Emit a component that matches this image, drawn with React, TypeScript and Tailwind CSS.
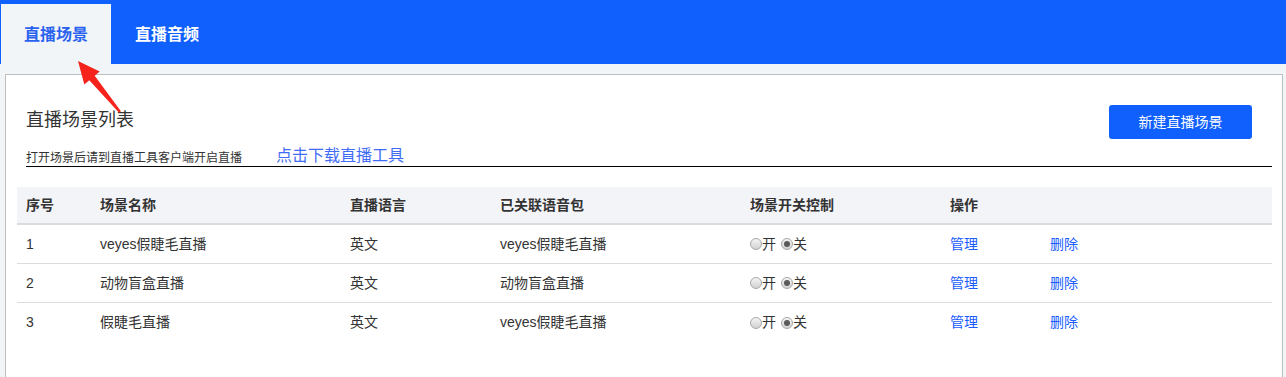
import React from "react";

const rows = [
  { id: "1", name: "veyes假睫毛直播", lang: "英文", pack: "veyes假睫毛直播" },
  { id: "2", name: "动物盲盒直播", lang: "英文", pack: "动物盲盒直播" },
  { id: "3", name: "假睫毛直播", lang: "英文", pack: "veyes假睫毛直播" },
];

const grid = "grid grid-cols-[74px_250px_150px_250px_200px_100px_1fr] pl-[9px]";

function Radio({ checked }: { checked?: boolean }) {
  return (
    <span className="inline-flex w-[12px] h-[12px] rounded-full border border-[#a8a8a8] bg-gradient-to-b from-[#f4f4f4] to-[#d2d2d2] items-center justify-center">
      {checked && <span className="w-[6px] h-[6px] rounded-full bg-[#5a5a5a]" />}
    </span>
  );
}

export default function App() {
  return (
    <div className="relative w-[1286px] h-[377px] overflow-hidden bg-[#f2f5f7] font-['Liberation_Sans','Noto_Sans_CJK_SC',sans-serif] text-[#333]">
      <div className="h-16 bg-[#1060fe] flex items-end pl-px">
        <div className="h-[60px] w-[110px] bg-[#f2f5f7] flex items-center justify-center pt-[2px] text-[16px] font-bold text-[#2a62f0]">
          直播场景
        </div>
        <div className="h-[60px] pl-[24px] pt-[2px] flex items-center text-[16px] font-bold text-white">直播音频</div>
      </div>

      <div className="mt-[10px] ml-[5px] mr-[3px] h-[320px] bg-white border border-[#bdbdbd]">
        <div className="pl-5 pr-[10px] pt-[30px]">
          <div className="flex items-center justify-between h-[34px]">
            <div className="text-[18px] leading-[24px] -mt-[4px]">直播场景列表</div>
            <button className="mr-[20px] w-[143px] h-[34px] rounded-[3px] bg-[#1060fe] text-white text-[14px]">
              新建直播场景
            </button>
          </div>
          <div className="flex items-end h-[28px] border-b border-black">
            <span className="text-[12px] leading-[16px]">打开场景后请到直播工具客户端开启直播</span>
            <span className="ml-[34px] text-[16px] leading-[20px] text-[#3f6cf5]">点击下载直播工具</span>
          </div>
        </div>

        <div className="ml-[11px] mr-[10px] mt-[20px] text-[14px]">
          <div className={`${grid} h-[38px] items-center bg-[#f3f4f8] font-bold border-b-2 border-[#dcdcdc]`}>
            <div>序号</div>
            <div>场景名称</div>
            <div>直播语言</div>
            <div>已关联语音包</div>
            <div>场景开关控制</div>
            <div>操作</div>
            <div />
          </div>
          {rows.map((r, i) => (
            <div
              key={r.id}
              className={`${grid} h-[39px] items-center ${i < rows.length - 1 ? "border-b border-[#dcdcdc]" : ""}`}
            >
              <div>{r.id}</div>
              <div>{r.name}</div>
              <div>{r.lang}</div>
              <div>{r.pack}</div>
              <div className="flex items-center">
                <Radio />
                <span>开</span>
                <span className="ml-[5px] flex items-center">
                  <Radio checked />
                  <span>关</span>
                </span>
              </div>
              <div className="text-[#1a5cff]">管理</div>
              <div className="text-[#1a5cff]">删除</div>
            </div>
          ))}
        </div>
      </div>

      <svg className="absolute left-0 top-0" width="140" height="130" viewBox="0 0 140 130">
        <polygon
          points="78,61 99.7,71.6 94.7,75.8 120.9,111.2 119.1,112.8 89.3,80.2 84.3,84.4"
          fill="#f5231c"
        />
      </svg>
    </div>
  );
}
